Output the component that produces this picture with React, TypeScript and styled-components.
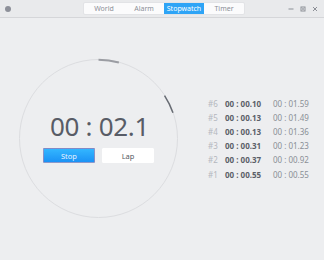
import styled, { createGlobalStyle } from 'styled-components';

const GlobalStyle = createGlobalStyle`
  html, body {
    margin: 0;
    padding: 0;
    background: #edeef0;
    font-family: "Noto Sans", "Open Sans", sans-serif;
  }
  #root {
    width: 324px;
    height: 260px;
    overflow: hidden;
  }
`;

const Window = styled.div`
  display: flex;
  flex-direction: column;
  width: 324px;
  height: 260px;
  background: #edeef0;
`;

const TitleBar = styled.header`
  display: flex;
  align-items: center;
  height: 17px;
  padding: 0 4px 0 4px;
  background: #e9eaec;
  border-bottom: 1px solid #d5d6d9;
`;

const AppIcon = styled.div`
  width: 6px;
  height: 6px;
  margin-left: 1px;
  border-radius: 50%;
  background: #8d9099;
`;

const Tabs = styled.nav`
  display: flex;
  margin-left: 72px;
  background: #fbfbfc;
  border: 1px solid #e2e3e6;
  border-radius: 2px;
`;

const Tab = styled.div<{ $active?: boolean }>`
  width: 40px;
  height: 11px;
  display: flex;
  align-items: center;
  justify-content: center;
  font-size: 7px;
  color: ${p => (p.$active ? '#ffffff' : '#8b8f98')};
  background: ${p => (p.$active ? '#2ea4f6' : 'transparent')};
`;

const WindowButtons = styled.div`
  display: flex;
  align-items: center;
  gap: 6px;
  margin-left: auto;
  margin-right: 2px;
`;

const WinButton = styled.svg`
  width: 6px;
  height: 6px;
  display: block;
`;

const Main = styled.main`
  display: flex;
  flex: 1;
  padding: 41px 0 0 19px;
`;

const Dial = styled.div`
  position: relative;
  width: 159px;
  height: 159px;
  box-sizing: border-box;
  border: 1.5px solid #dcdde0;
  border-radius: 50%;
  display: flex;
  flex-direction: column;
  align-items: center;
  padding-top: 50px;
`;

const DialArcs = styled.svg`
  position: absolute;
  left: -1.5px;
  top: -1.5px;
  width: 159px;
  height: 159px;
  overflow: visible;
`;

const Time = styled.div`
  font-size: 26px;
  line-height: 32px;
  color: #585c66;
  letter-spacing: -0.3px;
  white-space: pre;
  margin-left: 2px;
`;

const ButtonRow = styled.div`
  display: flex;
  gap: 7px;
  margin-top: 6px;
`;

const Button = styled.button<{ $primary?: boolean }>`
  width: 52px;
  height: 15px;
  padding: 0;
  font-family: inherit;
  font-size: 7.5px;
  border-radius: 1px;
  color: ${p => (p.$primary ? '#e8f4ff' : '#555a62')};
  background: ${p => (p.$primary ? 'linear-gradient(#33b6ff, #1b92f5)' : '#ffffff')};
  border: 1px solid ${p => (p.$primary ? 'rgba(214, 130, 160, 0.55)' : '#ffffff')};
`;

const LapList = styled.ul`
  list-style: none;
  margin: 37px 0 0 30px;
  padding: 0;
`;

const LapRow = styled.li`
  display: flex;
  align-items: center;
  height: 14.2px;
  font-size: 8px;
  white-space: pre;
`;

const LapNum = styled.span`
  width: 17px;
  color: #b4b7be;
`;

const LapTime = styled.span`
  width: 48px;
  font-weight: 700;
  color: #5b5f68;
`;

const LapTotal = styled.span`
  color: #8a8e96;
`;

const laps = [
  { n: 6, lap: '00 : 00.10', total: '00 : 01.59' },
  { n: 5, lap: '00 : 00.13', total: '00 : 01.49' },
  { n: 4, lap: '00 : 00.13', total: '00 : 01.36' },
  { n: 3, lap: '00 : 00.31', total: '00 : 01.23' },
  { n: 2, lap: '00 : 00.37', total: '00 : 00.92' },
  { n: 1, lap: '00 : 00.55', total: '00 : 00.55' },
];

const R = 78.75;
const C = 79.5;
function arc(a0: number, a1: number) {
  const p = (a: number) => {
    const r = (a * Math.PI) / 180;
    return `${C + R * Math.sin(r)} ${C - R * Math.cos(r)}`;
  };
  return `M ${p(a0)} A ${R} ${R} 0 0 1 ${p(a1)}`;
}

export default function App() {
  return (
    <Window>
      <GlobalStyle />
      <TitleBar>
        <AppIcon />
        <Tabs>
          <Tab>World</Tab>
          <Tab>Alarm</Tab>
          <Tab $active>Stopwatch</Tab>
          <Tab>Timer</Tab>
        </Tabs>
        <WindowButtons>
          <WinButton viewBox="0 0 6 6">
            <rect x="0.5" y="2.5" width="5" height="1" fill="#8c8f96" />
          </WinButton>
          <WinButton viewBox="0 0 6 6">
            <rect x="1" y="1" width="4" height="4" fill="none" stroke="#8c8f96" strokeWidth="1" />
            <rect x="2" y="2" width="2" height="2" fill="#b0b3b9" />
          </WinButton>
          <WinButton viewBox="0 0 6 6">
            <path d="M1 1 L5 5 M5 1 L1 5" stroke="#8c8f96" strokeWidth="1" />
          </WinButton>
        </WindowButtons>
      </TitleBar>
      <Main>
        <Dial>
          <DialArcs viewBox="0 0 159 159">
            <path d={arc(0, 15)} fill="none" stroke="#9b9da3" strokeWidth="2" />
            <path d={arc(57, 71)} fill="none" stroke="#676b73" strokeWidth="1.5" />
          </DialArcs>
          <Time>00 : 02.1</Time>
          <ButtonRow>
            <Button $primary>Stop</Button>
            <Button>Lap</Button>
          </ButtonRow>
        </Dial>
        <LapList>
          {laps.map(l => (
            <LapRow key={l.n}>
              <LapNum>#{l.n}</LapNum>
              <LapTime>{l.lap}</LapTime>
              <LapTotal>{l.total}</LapTotal>
            </LapRow>
          ))}
        </LapList>
      </Main>
    </Window>
  );
}
